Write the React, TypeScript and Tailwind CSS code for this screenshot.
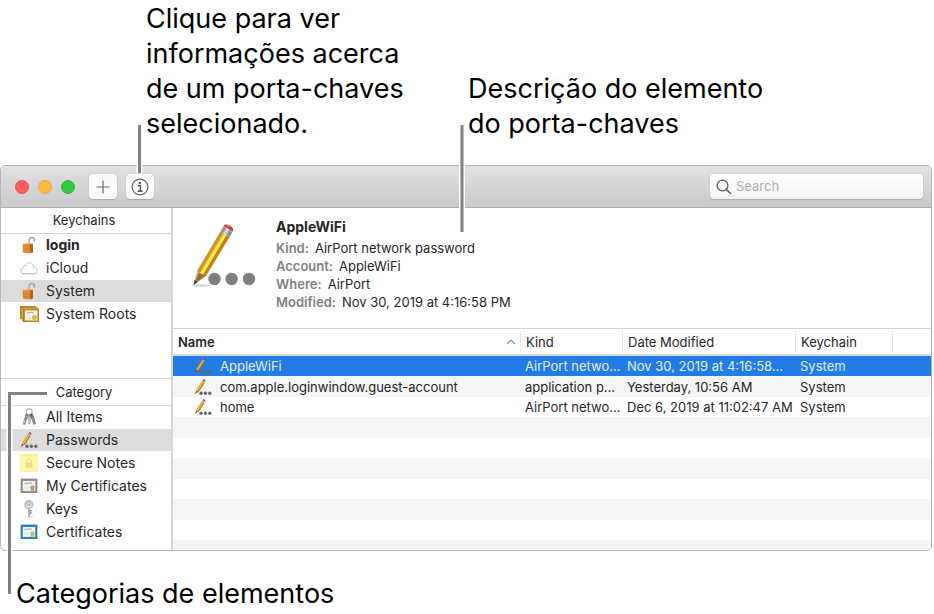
import type { ReactNode } from "react";

function PencilIcon({ className }: { className: string }) {
  return (
    <svg viewBox="0 0 66 66" className={className} aria-hidden="true">
      <ellipse cx="9" cy="63.500" rx="9" ry="1.200" fill="#000" opacity="0.18" />
      <path d="M1.500 63 L5 49 L13.500 54 Z" fill="#d9b27c" />
      <path d="M7 50.500 L13.500 54 L1.500 63 Z" fill="#94713f" />
      <path d="M1.500 63 L2.700 58 L5.500 60 Z" fill="#3d3d3d" />
      <path d="M5 49 L28.500 9.500 L32 11.500 L8.500 51.500 Z" fill="#d98f1e" />
      <path d="M7.500 50.500 L31 11 L35.500 13.500 L11.500 53 Z" fill="#fdf04e" />
      <path d="M11 52.800 L34.500 13 L37.500 15 L13.800 54.300 Z" fill="#c97c12" />
      <path d="M8.200 50 L31.500 11.300" stroke="#8d6414" strokeWidth="0.500" />
      <path d="M28.300 9.800 L31.600 4.100 L40.800 9.400 L37.300 15.300 Z" fill="#9b9ea2" />
      <path d="M31.300 11.300 L34.400 5.800 L37.400 7.500 L34.300 13.100 Z" fill="#f0f2f4" />
      <path d="M29.400 8 L38.600 13.300 M30.500 6.100 L39.700 11.400" stroke="#6d7074" strokeWidth="0.600" />
      <path d="M31.600 4.100 C33.300 0.200 42.800 4.600 40.800 9.400 Z" fill="#d63a31" />
      <path d="M33.800 3.600 C35.300 2 38.300 3.600 38.800 5.300 Z" fill="#fa8a7c" />
      <circle cx="22.500" cy="57" r="6.200" fill="#7f7f7f" />
      <circle cx="39.600" cy="57" r="6.200" fill="#7f7f7f" />
      <circle cx="57" cy="57" r="6.200" fill="#7f7f7f" />
    </svg>
  );
}

function SmallPencilIcon() {
  return (
    <svg viewBox="0 0 18 18" className="size-[18px]" aria-hidden="true">
      <path d="M1 16.300 L2.200 12.400 L4.200 13.600 Z" fill="#6f5a3c" />
      <path d="M2.200 12.500 L7.900 3.500 L10.100 4.700 L4.300 13.700 Z" fill="#f2b335" />
      <path d="M3.900 13.500 L9.700 4.500 L10.500 5 L4.700 14 Z" fill="#a86a1c" />
      <path d="M2.100 12.500 L7.900 3.500" stroke="#c98322" strokeWidth="0.500" />
      <path d="M7.800 3.600 L8.800 2 L11.200 3.400 L10.200 5 Z" fill="#a6aaae" />
      <path d="M8.700 2.100 C9.300 0.300 12.200 1.700 11.200 3.500 Z" fill="#b3322c" />
      <circle cx="7" cy="15.200" r="1.700" fill="#666" />
      <circle cx="11.400" cy="15.200" r="1.700" fill="#666" />
      <circle cx="15.800" cy="15.200" r="1.700" fill="#666" />
    </svg>
  );
}

function LockIcon() {
  return (
    <svg viewBox="0 0 18 18" className="size-[18px]" aria-hidden="true">
      <path d="M9.300 8 V4.300 C9.300 0.600 14.300 0.600 14.300 4 V5.600" fill="none" stroke="#8d9aa3" strokeWidth="1.500" />
      <path d="M9.600 7 V4.500 C9.700 1.800 12.800 1.300 13.500 3" fill="none" stroke="#dbe4ea" strokeWidth="0.600" />
      <path d="M2.800 8 L10 7.400 V17.400 L2.800 16.600 Z" fill="#e28c33" />
      <path d="M10 7.400 L13 8 V16.500 L10 17.400 Z" fill="#b5641c" />
      <path d="M2.800 10.300 H10 M2.800 12.600 H10 M2.800 14.800 H10" stroke="#d07c28" strokeWidth="0.600" />
      <path d="M2.800 8 L10 7.400 L13 8" fill="none" stroke="#f3bd7c" strokeWidth="0.700" />
    </svg>
  );
}

function CloudIcon() {
  return (
    <svg viewBox="0 0 18 18" className="size-[18px]" aria-hidden="true">
      <path
        d="M4.200 14.800 C-0.300 14.800 -0.200 9.400 3.300 9.100 C2.800 6.900 4.800 6 6 6.700 C7.300 2.200 13.400 2.700 13.600 8.300 C18.600 8.100 18.500 14.800 14.200 14.800 Z"
        fill="#fbfcfd"
        stroke="#a9b1b8"
        strokeWidth="0.700"
      />
      <path d="M2 14.300 C4 15.300 14 15.300 16 14.200" fill="none" stroke="#98a0a7" strokeWidth="0.500" />
    </svg>
  );
}

function RootsIcon() {
  return (
    <svg viewBox="0 0 19 18" className="h-[18px] w-[19px]" aria-hidden="true">
      <rect x="0.400" y="1.400" width="15" height="12" fill="#d29a25" stroke="#8b5f10" strokeWidth="0.600" />
      <rect x="2" y="2.600" width="15.500" height="13" fill="#f0c352" stroke="#8b5f10" strokeWidth="0.500" />
      <rect x="3.600" y="4" width="15" height="12.700" fill="#cf9420" stroke="#8b5f10" strokeWidth="0.600" />
      <rect x="5" y="5.400" width="12.400" height="10" fill="#f7f5ee" />
      <path d="M7 8 C8 7 9 8.500 10 7.600 S12 8 13.500 7.600" fill="none" stroke="#777" strokeWidth="0.700" />
      <circle cx="8.400" cy="11.600" r="1.300" fill="none" stroke="#ecc9c9" strokeWidth="0.500" />
      <path d="M6 13.800 H11" stroke="#d7c6c2" strokeWidth="0.500" />
      <circle cx="14.400" cy="12.600" r="2.200" fill="#dccb28" stroke="#a59a27" strokeWidth="0.500" />
    </svg>
  );
}

function KeyRingIcon() {
  return (
    <svg viewBox="0 0 18 18" className="size-[18px]" aria-hidden="true">
      <circle cx="9.200" cy="3.800" r="3" fill="none" stroke="#8d9093" strokeWidth="0.900" />
      <path d="M6 5.200 L9.300 7.500 L7 11.200 L5 17 L2.600 16.200 L4.400 10 Z" fill="#888d91" />
      <path d="M7.700 6 H10.700 V11 L10.400 16.600 L8.200 15.800 Z" fill="#a8acb0" />
      <path d="M9 6.500 L12.400 5 L14.100 9.500 L15.900 15.700 L13.500 16.700 L11.300 10.800 Z" fill="#70757a" />
      <path d="M5 12 L3.600 16 M9 9 V15 M12.500 10 L14.300 15.500 M7.500 6.500 L6.500 9" stroke="#dcdfe1" strokeWidth="0.600" />
      <circle cx="7.400" cy="7.300" r="0.600" fill="#333" />
      <circle cx="11.500" cy="7" r="0.600" fill="#333" />
    </svg>
  );
}

function NoteIcon() {
  return (
    <svg viewBox="0 0 18 18" className="size-[18px]" aria-hidden="true">
      <rect x="0.200" y="0.200" width="17.600" height="17.600" fill="#fdf7a6" stroke="#efe58f" strokeWidth="0.400" />
      <path d="M0.200 0.200 H17.800 V2.500 H0.200 Z" fill="#fcf18f" />
      <path d="M6.800 9 V6.800 C6.800 3.900 11.200 3.900 11.200 6.800 V9" fill="none" stroke="#e6da83" strokeWidth="1" />
      <rect x="5.600" y="8.400" width="6.800" height="5.400" fill="#e8dc80" />
      <path d="M5.600 10.300 H12.400 M5.600 12.200 H12.400" stroke="#f0e594" strokeWidth="0.500" />
    </svg>
  );
}

function CertificateIcon({ blue = false }: { blue?: boolean }) {
  return (
    <svg viewBox="0 0 18 18" className="size-[18px]" aria-hidden="true">
      <rect x="1" y="2" width="16" height="13.700" fill={blue ? "#2b85cb" : "#989898"} stroke={blue ? "#1b5d94" : "#707070"} strokeWidth="0.600" />
      <rect x="2.800" y="4" width="12.400" height="9.900" fill={blue ? "#f2f8fb" : "#f3f3f1"} />
      <path d="M4.500 6.500 C5.500 5.300 6.500 7.300 7.500 6.300 S9.500 6.500 12 6.100" fill="none" stroke="#6d7378" strokeWidth="0.700" />
      <path d="M4.500 9 C5.500 12.500 7.500 12.300 8.500 9.300" fill="none" stroke={blue ? "#a8cfee" : "#d0d0d0"} strokeWidth="0.800" />
      <circle cx="12.400" cy="10.800" r="2" fill={blue ? "#e0cf3a" : "#b7aa4d"} stroke="#77754e" strokeWidth="0.400" />
      <path d="M11.500 12.700 V14 M13.300 12.700 V14" stroke={blue ? "#b3a62d" : "#555"} strokeWidth="0.600" />
    </svg>
  );
}

function KeyIcon() {
  return (
    <svg viewBox="0 0 18 18" className="size-[18px]" aria-hidden="true">
      <ellipse cx="9.500" cy="16.900" rx="4" ry="0.700" fill="#000" opacity="0.15" />
      <path d="M8 7.500 H10 V16.200 L9 17 L8 16.200 Z" fill="#9c9fa1" />
      <path d="M10 10 H11.600 V11.300 H10.800 V12.300 H11.600 V14 H10 Z" fill="#85888a" />
      <circle cx="9" cy="4.600" r="4.100" fill="#d5d7d8" stroke="#96999b" strokeWidth="0.700" />
      <circle cx="9" cy="3.500" r="1.400" fill="#fff" stroke="#85888a" strokeWidth="0.700" />
      <path d="M9 8 V16" stroke="#e7e8e9" strokeWidth="0.500" />
    </svg>
  );
}

function SidebarItem({ icon, label, selected, bold }: { icon: ReactNode; label: string; selected?: boolean; bold?: boolean }) {
  return (
    <li>
      <button
        type="button"
        className={`flex h-[22px] w-full items-center pl-[19px] text-left text-sm ${selected ? "bg-[#dcdcdc]" : ""} ${bold ? "font-bold" : ""}`}
      >
        <span className="flex w-[26px] shrink-0">{icon}</span>
        {label}
      </button>
    </li>
  );
}

function Detail({ label, value }: { label: string; value: string }) {
  return (
    <div className="flex gap-1.5">
      <dt className="font-semibold text-[#808080]">{label}</dt>
      <dd>{value}</dd>
    </div>
  );
}

const rows = [
  { name: "AppleWiFi", kind: "AirPort netwo…", date: "Nov 30, 2019 at 4:16:58…", keychain: "System", style: "h-5 bg-[#217ce3] text-[#e4effb]" },
  { name: "com.apple.loginwindow.guest-account", kind: "application p…", date: "Yesterday, 10:56 AM", keychain: "System", style: "h-[21px] bg-[#f4f5f5]" },
  { name: "home", kind: "AirPort netwo…", date: "Dec 6, 2019 at 11:02:47 AM", keychain: "System", style: "h-5" },
];

const stripes = [
  "h-[21px] bg-[#f4f5f5]",
  "h-5",
  "h-[21px] bg-[#f4f5f5]",
  "h-5",
  "h-[21px] bg-[#f4f5f5]",
  "h-5",
  "h-[10px] bg-[#f4f5f5]",
];

function HeaderCell({ children, active }: { children?: ReactNode; active?: boolean }) {
  return (
    <th className="p-0 align-middle" scope="col">
      <div className={`flex h-[22px] items-center justify-between border-r border-[#e4e4e4] pr-1 pl-[5px] text-left ${active ? "font-semibold" : "font-normal"}`}>
        {children}
      </div>
    </th>
  );
}

export default function App() {
  return (
    <div className="relative min-h-screen overflow-hidden bg-white font-['Inter','Liberation_Sans',sans-serif] text-[#262626]">
      <div className="flex items-end pt-px pb-6 pl-[146px] text-[27px] leading-[35px] text-black">
        <p className="w-[322px] shrink-0">
          Clique para ver
          <br />
          informações acerca
          <br />
          de um porta-chaves
          <br />
          selecionado.
        </p>
        <p>
          Descrição do elemento
          <br />
          do porta-chaves
        </p>
      </div>

      <main className="mr-[2px] overflow-hidden rounded-[5px] border border-[#b4b4b4]">
        <header className="flex h-[42px] items-center border-b border-[#aeacae] bg-linear-to-b from-[#e2e0e2] to-[#cbc9cb] pr-2 pl-3.5">
          <div className="flex gap-[9px]">
            <span className="size-3.5 rounded-full border border-[#e9504d] bg-[#fc5f5c]" />
            <span className="size-3.5 rounded-full border border-[#e6a734] bg-[#fdbc40]" />
            <span className="size-3.5 rounded-full border border-[#28b53c] bg-[#33c748]" />
          </div>
          <button type="button" aria-label="Add" className="ml-3.5 flex h-[25px] w-7 items-center justify-center rounded-sm bg-[#fafafa] shadow-[0_0_1px_#aaa,0_1px_1px_#aaa]">
            <svg viewBox="0 0 14 14" className="size-3.5" aria-hidden="true">
              <path d="M7 0.500 V13.500 M0.500 7 H13.500" stroke="#6a6a6a" strokeWidth="1.200" />
            </svg>
          </button>
          <button type="button" aria-label="Info" className="ml-[9px] flex h-[25px] w-7 items-center justify-center rounded-sm bg-[#fafafa] shadow-[0_0_1px_#aaa,0_1px_1px_#aaa]">
            <svg viewBox="0 0 18 18" className="size-[18px]" aria-hidden="true">
              <circle cx="9" cy="9" r="7.900" fill="none" stroke="#666" strokeWidth="1.200" />
              <circle cx="8.800" cy="5" r="1.200" fill="#555" />
              <path d="M7 7.700 H9.400 V13 M6.700 13.200 H11.500" fill="none" stroke="#555" strokeWidth="1.500" />
            </svg>
          </button>
          <label className="ml-auto flex h-[25px] w-[213px] items-center gap-1 rounded-sm bg-linear-to-b from-white to-[#f3f3f3] pl-1.5 shadow-[0_0_1px_#aaa,0_1px_1px_#aaa]">
            <svg viewBox="0 0 16 16" className="size-4 shrink-0" aria-hidden="true">
              <circle cx="6.500" cy="6.500" r="5.400" fill="none" stroke="#5e5e5e" strokeWidth="1.300" />
              <path d="M10.400 10.400 L15 15" stroke="#5e5e5e" strokeWidth="1.500" />
            </svg>
            <input type="search" aria-label="Search" placeholder="Search" className="min-w-0 flex-1 bg-transparent text-[13px] outline-none placeholder:text-[#b0b0b0]" />
          </label>
        </header>

        <div className="flex">
          <nav className="flex w-[172px] shrink-0 flex-col border-r-2 border-[#d6d6d6]">
            <h2 className="h-[26px] border-b border-[#d6d6d6] pr-1 text-center text-[13px] leading-[25px]">Keychains</h2>
            <ul className="flex flex-1 flex-col gap-px">
              <SidebarItem icon={<LockIcon />} label="login" bold />
              <SidebarItem icon={<CloudIcon />} label="iCloud" />
              <SidebarItem icon={<LockIcon />} label="System" selected />
              <SidebarItem icon={<RootsIcon />} label="System Roots" />
            </ul>
            <h2 className="h-[28px] border-y border-[#d6d6d6] pr-1 text-center text-[13px] leading-[27px]">Category</h2>
            <ul className="flex flex-col gap-px pb-[7px]">
              <SidebarItem icon={<KeyRingIcon />} label="All Items" />
              <SidebarItem icon={<SmallPencilIcon />} label="Passwords" selected />
              <SidebarItem icon={<NoteIcon />} label="Secure Notes" />
              <SidebarItem icon={<CertificateIcon />} label="My Certificates" />
              <SidebarItem icon={<KeyIcon />} label="Keys" />
              <SidebarItem icon={<CertificateIcon blue />} label="Certificates" />
            </ul>
          </nav>

          <section className="min-w-0 flex-1">
            <div className="flex h-[121px] gap-[18px] border-b border-[#d0d0d0] pt-[9px] pl-[19px]">
              <PencilIcon className="mt-[5px] size-[66px] shrink-0" />
              <div>
                <h1 className="text-sm leading-5 font-bold">AppleWiFi</h1>
                <dl className="mt-0.5 text-[13px] leading-[18px]">
                  <Detail label="Kind:" value="AirPort network password" />
                  <Detail label="Account:" value="AppleWiFi" />
                  <Detail label="Where:" value="AirPort" />
                  <Detail label="Modified:" value="Nov 30, 2019 at 4:16:58 PM" />
                </dl>
              </div>
            </div>

            <table className="w-full table-fixed border-collapse text-[13px] leading-5 whitespace-nowrap">
              <colgroup>
                <col />
                <col className="w-[102px]" />
                <col className="w-[173px]" />
                <col className="w-[97px]" />
                <col className="w-[38px]" />
              </colgroup>
              <thead>
                <tr className="h-[26px] border-b-2 border-[#d6d6d6]">
                  <HeaderCell active>
                    Name
                    <svg viewBox="0 0 10 6" className="h-1.5 w-2.5" aria-hidden="true">
                      <path d="M1 5 L5 1 L9 5" fill="none" stroke="#8a8a8a" strokeWidth="1.200" />
                    </svg>
                  </HeaderCell>
                  <HeaderCell>Kind</HeaderCell>
                  <HeaderCell>Date Modified</HeaderCell>
                  <HeaderCell>Keychain</HeaderCell>
                  <td />
                </tr>
              </thead>
              <tbody>
                {rows.map((row) => (
                  <tr key={row.name} className={row.style}>
                    <td className="p-0 pl-[21px]">
                      <span className="flex h-5 items-center gap-2">
                        <SmallPencilIcon />
                        {row.name}
                      </span>
                    </td>
                    <td className="p-0 pl-1">{row.kind}</td>
                    <td className="p-0 pl-1">{row.date}</td>
                    <td className="p-0 pl-1">{row.keychain}</td>
                    <td className="p-0" />
                  </tr>
                ))}
                {stripes.map((style, i) => (
                  <tr key={i} className={style}>
                    <td colSpan={5} className="p-0" />
                  </tr>
                ))}
              </tbody>
            </table>
          </section>
        </div>
      </main>

      <p className="pt-[25px] pl-4 text-[27px] leading-[35px] text-black">Categorias de elementos</p>

      <svg className="pointer-events-none absolute top-0 left-0 h-[614px] w-[480px]" viewBox="0 0 480 614" aria-hidden="true">
        <g fill="none" stroke="#fff" strokeWidth="6">
          <path d="M139.500 125 V173" />
          <path d="M462 125 V231" />
          <path d="M46 393.500 H9.500 V594" />
        </g>
        <g fill="none" stroke="#808080" strokeWidth="3">
          <path d="M139.500 125 V173" />
          <path d="M462 125 V232" />
          <path d="M47 393.500 H9.500 V594" />
        </g>
      </svg>
    </div>
  );
}
